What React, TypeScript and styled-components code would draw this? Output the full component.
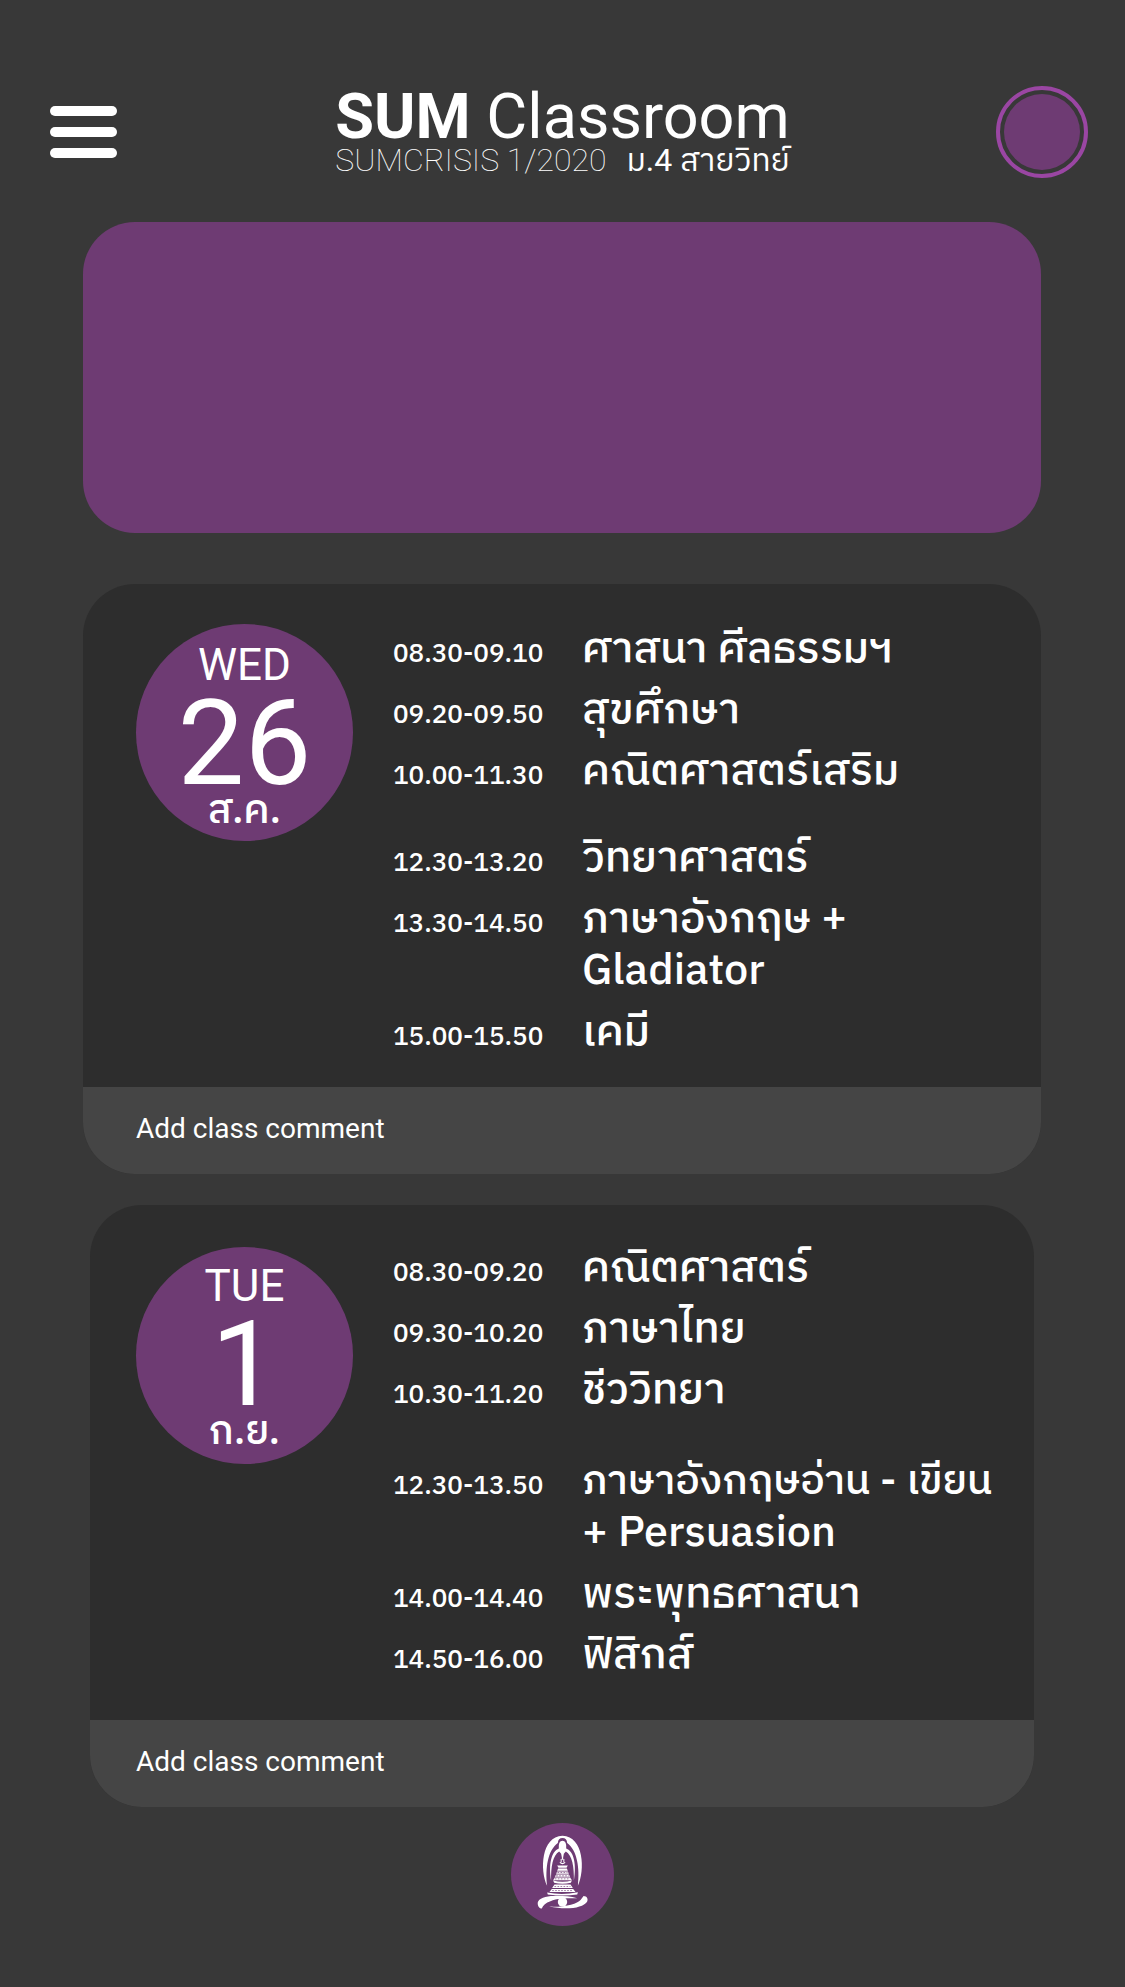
import React from "react";
import styled, { createGlobalStyle } from "styled-components";

const purple = "#6e3b73";
const sans = `Roboto, "IBM Plex Sans Thai", "Noto Sans Thai", "Noto Sans", sans-serif`;
const plex = `"IBM Plex Sans Thai", "IBM Plex Sans", Roboto, "Noto Sans Thai", "Noto Sans", sans-serif`;

const GlobalStyle = createGlobalStyle`
  * { box-sizing: border-box; }
  body { margin: 0; background: #383838; color: #fff; font-family: ${sans}; }
  h1, h2, p, ul { margin: 0; padding: 0; font-weight: 400; }
  button { border: 0; padding: 0; background: none; color: inherit; font: inherit; cursor: pointer; }
`;

const Page = styled.div`
  min-height: 100vh;
  padding: 84px 0 62px;
`;

const Header = styled.header`
  display: grid;
  grid-template-columns: 1fr auto 1fr;
  align-items: center;
  padding: 0 37px;
  height: 96px;
`;

const MenuButton = styled.button`
  display: flex;
  flex-direction: column;
  justify-self: start;
  gap: 11px;
  width: 67px;
  margin-left: 13px;
`;

const MenuBar = styled.span`
  height: 10px;
  border-radius: 5px;
  background: #fff;
`;

const Title = styled.h1`
  font-size: 63px;
  line-height: 60px;
`;

const Subtitle = styled.p`
  display: flex;
  justify-content: space-between;
  font-size: 32px;
  line-height: 26px;
  padding-bottom: 4px;
`;

const Course = styled.span`
  font-weight: 100;
`;

const Avatar = styled.button`
  justify-self: end;
  width: 92px;
  height: 92px;
  border: 4px solid #9a46a3;
  border-radius: 50%;
  padding: 4px;
  background: ${purple} content-box;
`;

const Main = styled.main`
  display: flex;
  flex-direction: column;
  padding: 42px 84px 0 83px;
`;

const Banner = styled.section`
  height: 311px;
  margin-bottom: 51px;
  border-radius: 52px;
  background: ${purple};
`;

const Card = styled.article<{ $inset: number }>`
  margin: 0 ${(p) => p.$inset}px ${(p) => (p.$inset ? 16 : 31)}px;
  border-radius: 52px;
  overflow: hidden;
  background: #2d2d2d;
`;

const CardBody = styled.div<{ $inset: number }>`
  display: grid;
  grid-template-columns: 217px 1fr;
  align-items: start;
  column-gap: 40px;
  padding: ${(p) => (p.$inset ? "38px 0 38px" : "40px 0 28px")};
  padding-left: ${(p) => 53 - p.$inset}px;
`;

const DateBadge = styled.h2<{ $drop: number }>`
  display: flex;
  flex-direction: column;
  align-items: center;
  height: 217px;
  margin-top: ${(p) => p.$drop}px;
  padding-top: ${(p) => (p.$drop ? 17 : 19)}px;
  border-radius: 50%;
  background: ${purple};
`;

const Weekday = styled.span`
  font-size: 44px;
  line-height: 44px;
`;

const DateNumber = styled.span`
  padding-top: 5px;
  font-size: 119px;
  line-height: 104px;
`;

const Month = styled.span`
  font-family: ${plex};
  font-size: 40px;
  font-weight: 500;
  line-height: 30px;
`;

const Schedule = styled.ul`
  display: flex;
  flex-direction: column;
  gap: 9px;
  list-style: none;
  font-family: ${plex};
  font-weight: 500;
`;

const Lesson = styled.li<{ $gap: number }>`
  display: grid;
  grid-template-columns: 149px 1fr;
  column-gap: 40px;
  align-items: baseline;
  margin-top: ${(p) => p.$gap}px;
`;

const Time = styled.time`
  font-size: 26px;
  line-height: 32px;
  white-space: nowrap;
`;

const Subject = styled.span<{ $compact?: boolean }>`
  display: block;
  font-size: 43px;
  line-height: 52px;
  white-space: pre-line;

  &::first-line {
    font-size: ${(p) => (p.$compact ? 41 : 43)}px;
  }
`;

const CommentButton = styled.button<{ $inset: number }>`
  display: block;
  width: 100%;
  height: 87px;
  padding: 0 0 4px ${(p) => 53 - p.$inset}px;
  background: #454545;
  font-size: 28px;
  line-height: 32px;
  text-align: left;
`;

const Emblem = styled.svg`
  display: block;
  width: 103px;
  height: 103px;
  margin: 0 auto;
`;

type Entry = { time: string; subject: string; gap?: number; compact?: boolean };
type Day = { weekday: string; date: string; month: string; inset: number; drop: number; lessons: Entry[] };

const days: Day[] = [
  {
    weekday: "WED", date: "26", month: "ส.ค.", inset: 0, drop: 0,
    lessons: [
      { time: "08.30-09.10", subject: "ศาสนา ศีลธรรมฯ" },
      { time: "09.20-09.50", subject: "สุขศึกษา" },
      { time: "10.00-11.30", subject: "คณิตศาสตร์เสริม" },
      { time: "12.30-13.20", subject: "วิทยาศาสตร์", gap: 26 },
      { time: "13.30-14.50", subject: "ภาษาอังกฤษ +\nGladiator" },
      { time: "15.00-15.50", subject: "เคมี" },
    ],
  },
  {
    weekday: "TUE", date: "1", month: "ก.ย.", inset: 7, drop: 4,
    lessons: [
      { time: "08.30-09.20", subject: "คณิตศาสตร์" },
      { time: "09.30-10.20", subject: "ภาษาไทย" },
      { time: "10.30-11.20", subject: "ชีววิทยา" },
      { time: "12.30-13.50", subject: "ภาษาอังกฤษอ่าน - เขียน\n+ Persuasion", gap: 30, compact: true },
      { time: "14.00-14.40", subject: "พระพุทธศาสนา" },
      { time: "14.50-16.00", subject: "ฟิสิกส์" },
    ],
  },
];

function SchoolEmblem() {
  return (
    <Emblem viewBox="64 66 308 308" role="img" aria-label="School emblem">
      <circle cx="218" cy="220" r="154" fill={purple} />
      <g fill="#fff">
        <path d="M172 254C150 207 154 106 218 104C282 106 286 207 264 254C270 200 262 148 232 126Q231 111 218 111Q205 111 204 126C174 148 166 200 172 254Z" />
        <path d="M184 239C176 190 184 151 207 142Q205 119 218 119Q231 119 229 142C253 151 260 190 252 239C253 197 247 162 228 151L222 158L218 175L214 158L208 151C189 162 183 197 184 239Z" />
        <path d="M202 193h32l-4 7h-24zM205 202h26l3 7h-32zM202 211h32l3 7h-38zM199 220h38l4 7h-46zM195 229h46l5 8h-56zM190 238Q218 246 246 238L243 245Q218 251 193 245zM194 250h48l7 10h-62zM186 263h64l7 9h-78z" />
        <path d="M172 274Q218 283 264 273L262 280Q218 285 174 280Z" />
        <path d="M144 304C146 291 168 284 192 284C214 283 240 285 262 291C236 291 204 290 182 300C168 304 160 312 156 322C148 322 143 314 144 304Z" />
        <path d="M281 284C291 284 296 293 291 302C280 318 236 328 178 316C226 318 262 308 272 296Z" />
        <circle cx="218" cy="302" r="14" />
      </g>
      <path d="M218 122v54M209 147h18" stroke="#fff" strokeWidth="4" />
      <path d="M214 174v9M222 174v9M210 184q8 7 16 0" fill="none" stroke="#fff" strokeWidth="3" />
      <path d="M203 214h30M199 224h38M195 233h46M194 256h48M187 268h62" stroke={purple} strokeWidth="2" strokeDasharray="5 4" />
    </Emblem>
  );
}

export default function App() {
  return (
    <Page>
      <GlobalStyle />
      <Header>
        <MenuButton aria-label="Menu">
          <MenuBar />
          <MenuBar />
          <MenuBar />
        </MenuButton>
        <div>
          <Title><b>SUM</b> Classroom</Title>
          <Subtitle>
            <Course>SUMCRISIS 1/2020</Course>
            <span>ม.4 สายวิทย์</span>
          </Subtitle>
        </div>
        <Avatar aria-label="Profile" />
      </Header>
      <Main>
        <Banner />
        {days.map((day) => (
          <Card key={day.weekday} $inset={day.inset}>
            <CardBody $inset={day.inset}>
              <DateBadge $drop={day.drop}>
                <Weekday>{day.weekday}</Weekday>
                <DateNumber>{day.date}</DateNumber>
                <Month>{day.month}</Month>
              </DateBadge>
              <Schedule>
                {day.lessons.map((lesson) => (
                  <Lesson key={lesson.time} $gap={lesson.gap ?? 0}>
                    <Time>{lesson.time}</Time>
                    <Subject $compact={lesson.compact}>{lesson.subject}</Subject>
                  </Lesson>
                ))}
              </Schedule>
            </CardBody>
            <CommentButton $inset={day.inset}>Add class comment</CommentButton>
          </Card>
        ))}
        <SchoolEmblem />
      </Main>
    </Page>
  );
}
